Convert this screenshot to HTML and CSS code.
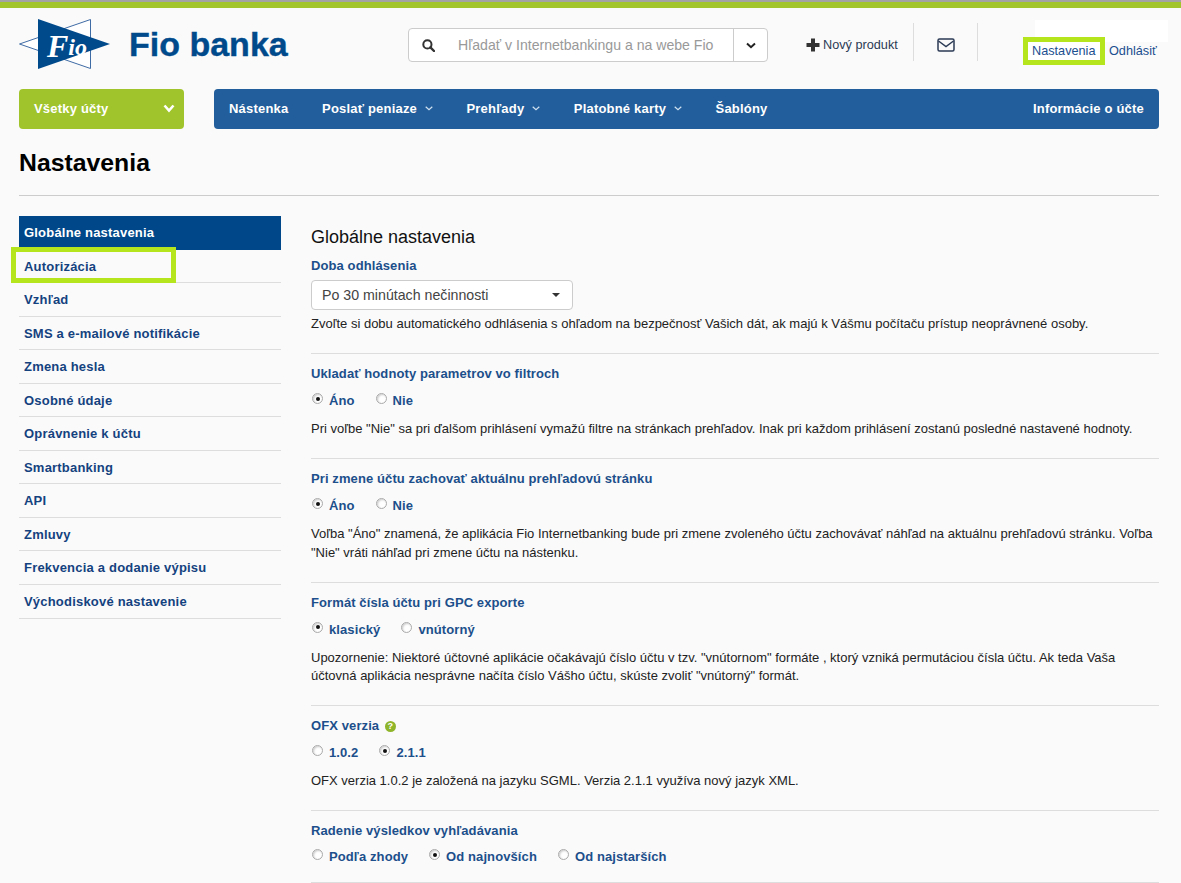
FILE: index.html
```html
<!DOCTYPE html>
<html lang="sk">
<head>
  <meta charset="UTF-8">
  <title>Nastavenia - Fio banka</title>
  <link rel="stylesheet" href="styles.css">
</head>
<body>
  <div class="topbar"></div>

  <div class="page">
    <!-- hlavicka -->
    <header class="head">
      <a class="logo" href="#">
        <svg class="logo-mark" width="92" height="50" viewBox="0 0 92 50">
          <polygon points="0.500,25 71.500,0.500 71.500,49.500" fill="#fff" stroke="#3f6ba5" stroke-width="1"/>
          <polygon points="19,0 91,25 19,50" fill="#004a8c"/>
          <text class="logo-fio" x="28" y="38"><tspan class="logo-f">F</tspan><tspan class="logo-io" dy="-2">io</tspan></text>
        </svg>
        <span class="logo-text">Fio banka</span>
      </a>

      <form class="search">
        <span class="search-icon">
          <svg width="13" height="13" viewBox="0 0 13 13"><circle cx="5.400" cy="5.400" r="4.100" fill="none" stroke="#333" stroke-width="2"/><path d="M8.400 8.400 12 12" stroke="#333" stroke-width="2.400" stroke-linecap="round"/></svg>
        </span>
        <span class="search-input">Hľadať v Internetbankingu a na webe Fio</span>
        <span class="search-more">
          <svg width="10" height="7" viewBox="0 0 10 7"><path d="M1 1.500 5 5.200 9 1.500" fill="none" stroke="#222" stroke-width="2"/></svg>
        </span>
      </form>

      <a class="new-product" href="#">
        <svg width="14" height="14" viewBox="0 0 14 14"><path d="M5 0.500h4v4.500h4.500v4h-4.500v4.500h-4v-4.500h-4.500v-4h4.500z" fill="#333"/></svg>
        Nový produkt
      </a>
      <a class="mail" href="#">
        <svg width="18" height="14" viewBox="0 0 18 14"><rect x="1" y="1" width="16" height="12" rx="1.500" fill="none" stroke="#2b3a55" stroke-width="1.500"/><path d="M1.500 3 9 8.500 16.500 3" fill="none" stroke="#2b3a55" stroke-width="1.500"/></svg>
      </a>
      <div class="white-patch"></div>
      <div class="user-links">
        <a class="marked" href="#">Nastavenia</a>
        <a href="#">Odhlásiť</a>
      </div>
    </header>

    <!-- hlavne menu -->
    <div class="menu-row">
      <a class="accounts" href="#">
        Všetky účty
        <svg width="12" height="9" viewBox="0 0 12 9"><path d="M1.500 1.500 6 6.500 10.500 1.500" fill="none" stroke="#fff" stroke-width="2.600"/></svg>
      </a>
      <nav class="menu">
        <a href="#">Nástenka</a>
        <a href="#" class="has-sub">Poslať peniaze <svg width="8" height="5" viewBox="0 0 8 5"><path d="M.7.7 4 3.800 7.300.7" fill="none" stroke="#cfe0f0" stroke-width="1.200"/></svg></a>
        <a href="#" class="has-sub">Prehľady <svg width="8" height="5" viewBox="0 0 8 5"><path d="M.7.7 4 3.800 7.300.7" fill="none" stroke="#cfe0f0" stroke-width="1.200"/></svg></a>
        <a href="#" class="has-sub">Platobné karty <svg width="8" height="5" viewBox="0 0 8 5"><path d="M.7.7 4 3.800 7.300.7" fill="none" stroke="#cfe0f0" stroke-width="1.200"/></svg></a>
        <a href="#">Šablóny</a>
        <a href="#" class="menu-right">Informácie o účte</a>
      </nav>
    </div>

    <h1>Nastavenia</h1>

    <div class="layout">
      <div class="side-wrap">
        <ul class="side">
          <li class="active"><a href="#">Globálne nastavenia</a></li>
          <li><a href="#">Autorizácia</a></li>
          <li><a href="#">Vzhľad</a></li>
          <li><a href="#">SMS a e-mailové notifikácie</a></li>
          <li><a href="#">Zmena hesla</a></li>
          <li><a href="#">Osobné údaje</a></li>
          <li><a href="#">Oprávnenie k účtu</a></li>
          <li><a href="#">Smartbanking</a></li>
          <li><a href="#">API</a></li>
          <li><a href="#">Zmluvy</a></li>
          <li><a href="#">Frekvencia a dodanie výpisu</a></li>
          <li><a href="#">Východiskové nastavenie</a></li>
        </ul>
        <div class="mark-side"></div>
      </div>

      <main class="content">
        <h2>Globálne nastavenia</h2>

        <section class="block block-first">
          <div class="label">Doba odhlásenia</div>
          <div class="select">Po 30 minútach nečinnosti<span class="caret"></span></div>
          <p class="note-tight">Zvoľte si dobu automatického odhlásenia s ohľadom na bezpečnosť Vašich dát, ak majú k Vášmu počítaču prístup neoprávnené osoby.</p>
        </section>

        <section class="block">
          <div class="label">Ukladať hodnoty parametrov vo filtroch</div>
          <div class="radios">
            <label><input type="radio" name="a" checked>Áno</label>
            <label><input type="radio" name="a">Nie</label>
          </div>
          <p>Pri voľbe "Nie" sa pri ďalšom prihlásení vymažú filtre na stránkach prehľadov. Inak pri každom prihlásení zostanú posledné nastavené hodnoty.</p>
        </section>

        <section class="block">
          <div class="label">Pri zmene účtu zachovať aktuálnu prehľadovú stránku</div>
          <div class="radios">
            <label><input type="radio" name="b" checked>Áno</label>
            <label><input type="radio" name="b">Nie</label>
          </div>
          <p>Voľba "Áno" znamená, že aplikácia Fio Internetbanking bude pri zmene zvoleného účtu zachovávať náhľad na aktuálnu prehľadovú stránku. Voľba "Nie" vráti náhľad pri zmene účtu na nástenku.</p>
        </section>

        <section class="block">
          <div class="label">Formát čísla účtu pri GPC exporte</div>
          <div class="radios">
            <label><input type="radio" name="c" checked>klasický</label>
            <label><input type="radio" name="c">vnútorný</label>
          </div>
          <p>Upozornenie: Niektoré účtovné aplikácie očakávajú číslo účtu v tzv. "vnútornom" formáte , ktorý vzniká permutáciou čísla účtu. Ak teda Vaša účtovná aplikácia nesprávne načíta číslo Vášho účtu, skúste zvoliť "vnútorný" formát.</p>
        </section>

        <section class="block">
          <div class="label">OFX verzia <span class="help">?</span></div>
          <div class="radios">
            <label><input type="radio" name="d">1.0.2</label>
            <label><input type="radio" name="d" checked>2.1.1</label>
          </div>
          <p>OFX verzia 1.0.2 je založená na jazyku SGML. Verzia 2.1.1 využíva nový jazyk XML.</p>
        </section>

        <section class="block block-last">
          <div class="label">Radenie výsledkov vyhľadávania</div>
          <div class="radios">
            <label><input type="radio" name="e">Podľa zhody</label>
            <label><input type="radio" name="e" checked>Od najnovších</label>
            <label><input type="radio" name="e">Od najstarších</label>
          </div>
        </section>
      </main>
    </div>
  </div>
</body>
</html>
```

FILE: styles.css
```css
* {
  margin: 0;
  padding: 0;
  box-sizing: border-box;
}

html, body {
  height: 883px;
  overflow: hidden;
}

body {
  background: #fafafa;
  color: #222;
  font-family: "Liberation Sans", Arial, sans-serif;
  font-size: 13px;
}

a {
  text-decoration: none;
  color: inherit;
}

.topbar {
  height: 8px;
  background: #a2c52b;
  border-top: 2px solid #a3a3a3;
}

.page {
  padding: 0 22px 0 19px;
}

/* hlavicka */
.head {
  position: relative;
  display: flex;
  align-items: flex-start;
  height: 81px;
}

.logo {
  display: flex;
  align-items: center;
  width: 389px;
  padding-top: 11px;
}

.logo-mark {
  display: block;
}

.logo-fio {
  font-family: "Liberation Serif", serif;
  font-style: italic;
  font-weight: bold;
  fill: #fff;
}

.logo-f {
  font-size: 32px;
}

.logo-io {
  font-size: 24px;
}

.logo-text {
  margin-left: 18px;
  color: #004a8c;
  font-size: 34px;
  font-weight: bold;
  line-height: 50px;
  -webkit-text-stroke: 0.4px #004a8c;
}

.search {
  display: flex;
  align-items: center;
  width: 360px;
  height: 34px;
  margin-top: 20px;
  background: #fff;
  border: 1px solid #ccc;
  border-radius: 4px;
}

.search-icon {
  display: flex;
  width: 49px;
  padding-left: 13px;
}

.search-input {
  flex: 1;
  color: #999;
  font-size: 14.100px;
}

.search-more {
  display: flex;
  align-items: center;
  justify-content: center;
  width: 34px;
  height: 100%;
  border-left: 1px solid #ccc;
}

.new-product {
  display: flex;
  align-items: center;
  gap: 3px;
  width: 108px;
  height: 38px;
  margin: 15px 0 0 38px;
  padding-top: 6px;
  border-right: 1px solid #ddd;
  color: #2b3a55;
  font-size: 12.700px;
}

.mail {
  display: flex;
  align-items: center;
  justify-content: center;
  width: 64px;
  height: 38px;
  margin-top: 15px;
  padding-top: 6px;
  border-right: 1px solid #ddd;
}

.white-patch {
  position: absolute;
  top: 12px;
  left: 1016px;
  width: 133px;
  height: 22px;
  background: #fff;
}

.user-links {
  position: relative;
  display: flex;
  gap: 9px;
  margin: 34px 0 0 50px;
  color: #1b4f8f;
  font-size: 12.700px;
  line-height: 18px;
  white-space: nowrap;
}

.marked {
  width: 72px;
  padding-left: 4px;
  background: #fff;
  outline: 5px solid #b5e61d;
}

/* menu */
.menu-row {
  display: flex;
  gap: 30px;
  height: 40px;
  color: #fff;
  font-size: 13px;
  font-weight: bold;
  letter-spacing: 0.200px;
}

.accounts {
  display: flex;
  align-items: center;
  justify-content: space-between;
  width: 165px;
  padding: 0 9px 2px 15px;
  background: #a0c42b;
  border-radius: 4px;
}

.menu {
  display: flex;
  align-items: center;
  flex: 1;
  gap: 33.600px;
  padding: 0 15px 2px;
  background: #225e9b;
  border-radius: 4px;
}

.menu svg {
  margin-left: 4px;
  vertical-align: 2px;
}

.menu-right {
  margin-left: auto;
}

h1 {
  height: 67px;
  padding-top: 20px;
  border-bottom: 1px solid #ccc;
  color: #000;
  font-size: 24.800px;
  line-height: 28px;
}

/* levy stlpec */
.layout {
  display: flex;
  gap: 30px;
  padding-top: 20px;
}

.side-wrap {
  position: relative;
  flex: none;
  width: 262px;
}

.side {
  list-style: none;
  color: #14427f;
  font-size: 13px;
  font-weight: bold;
  letter-spacing: 0.2px;
}

.side li {
  height: 33.550px;
  padding-left: 5px;
  border-bottom: 1px solid #ddd;
  line-height: 33px;
}

.side li.active {
  background: #004789;
  border-bottom: 0;
  color: #fff;
}

/* ramcek okolo polozky Autorizacia */
.mark-side {
  position: absolute;
  top: 31px;
  left: -8px;
  width: 165px;
  height: 36px;
  border: 5px solid #b5e61d;
}

/* obsah */
.content {
  flex: 1;
  min-width: 0;
}

h2 {
  margin-top: 10px;
  color: #111;
  font-size: 18px;
  font-weight: normal;
  line-height: 22px;
}

.block {
  padding: 10px 0 19.500px;
  border-bottom: 1px solid #ddd;
}

.block-first {
  padding: 8px 0 20px;
}

.block-last {
  padding-bottom: 15px;
}

.block-last .radios {
  margin-top: 6px;
}

.label {
  color: #1c4f8b;
  font-size: 13px;
  font-weight: bold;
  letter-spacing: 0.1px;
  line-height: 20px;
}

.select {
  position: relative;
  width: 262px;
  height: 30px;
  margin-top: 4px;
  padding-left: 10px;
  background: #fff;
  border: 1px solid #ccc;
  border-radius: 4px;
  color: #444;
  font-size: 14.200px;
  line-height: 28px;
}

.caret {
  position: absolute;
  top: 12px;
  right: 12px;
  border-top: 4px solid #333;
  border-left: 4px solid transparent;
  border-right: 4px solid transparent;
}

.radios {
  display: flex;
  gap: 20px;
  height: 20px;
  margin-top: 7px;
  color: #1c4f8b;
  font-size: 13px;
  font-weight: bold;
  letter-spacing: 0.1px;
  line-height: 20px;
}

.radios label {
  display: flex;
  align-items: center;
}

.radios input {
  appearance: none;
  position: relative;
  width: 11px;
  height: 11px;
  margin: -5px 6px 0 1px;
  background: #fff;
  border: 1px solid #aaa;
  border-radius: 50%;
  box-shadow: inset 1px 1px 2px #ccc;
}

.radios input:checked::after {
  content: "";
  position: absolute;
  top: 2.500px;
  left: 2.500px;
  width: 4px;
  height: 4px;
  background: #111;
  border-radius: 50%;
}

.block p {
  margin-top: 9px;
  line-height: 18.500px;
}

.block p.note-tight {
  margin-top: 4px;
  line-height: 19px;
}

.help {
  display: inline-block;
  width: 11px;
  height: 11px;
  margin-left: 2px;
  background: #8fb52a;
  border-radius: 50%;
  color: #fff;
  font-size: 9px;
  line-height: 11px;
  text-align: center;
  vertical-align: 1px;
}
```
